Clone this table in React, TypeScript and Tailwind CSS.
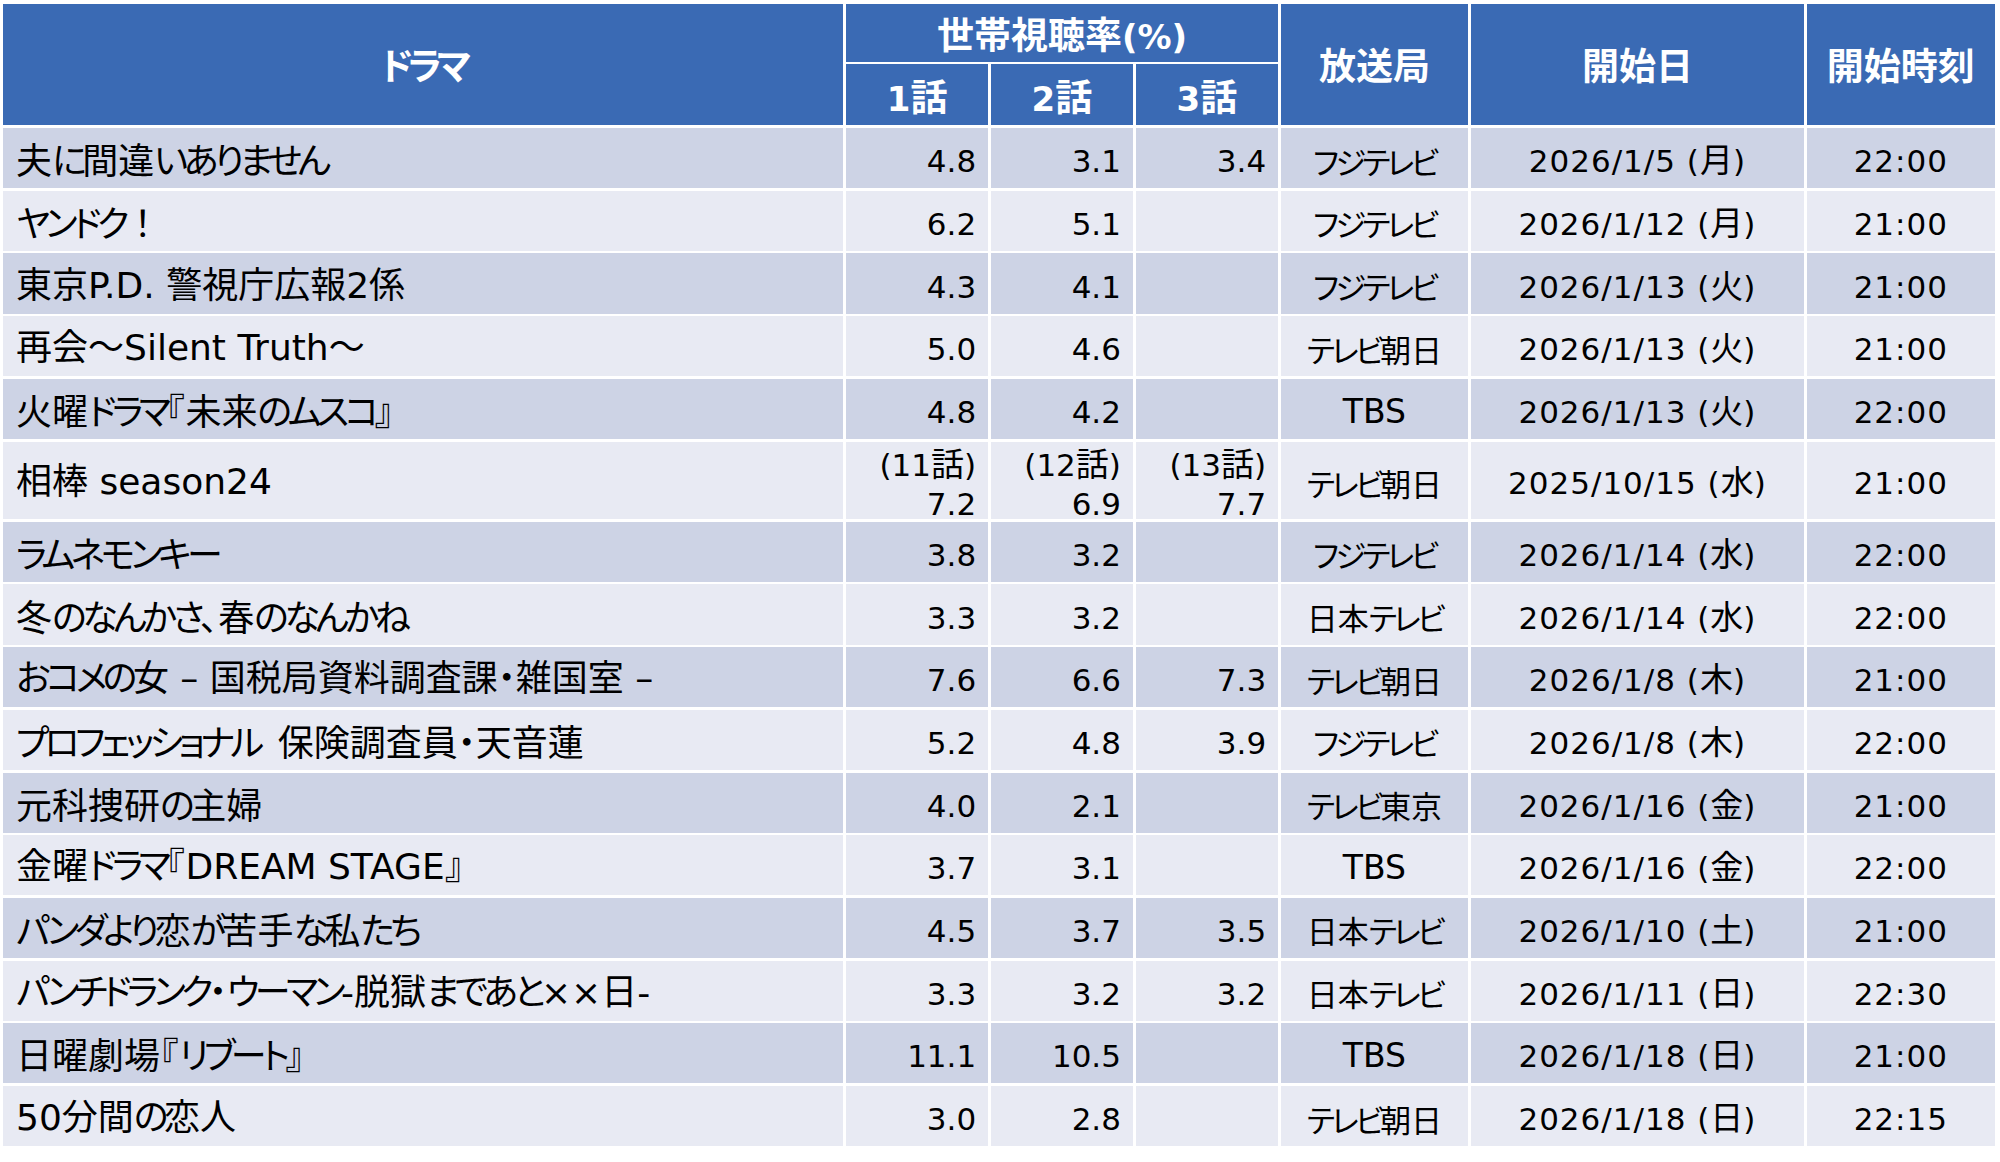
import React from 'react';

type Cell = string | [string, string];
type Row = { t: string; a: Cell; b: Cell; c: Cell; s: string; d: string; tm: string; tall?: boolean };

const rows: Row[] = [
  { t: '夫に間違いありません', a: '4.8', b: '3.1', c: '3.4', s: 'フジテレビ', d: '2026/1/5 (月)', tm: '22:00' },
  { t: 'ヤンドク！', a: '6.2', b: '5.1', c: '', s: 'フジテレビ', d: '2026/1/12 (月)', tm: '21:00' },
  { t: '東京P.D. 警視庁広報2係', a: '4.3', b: '4.1', c: '', s: 'フジテレビ', d: '2026/1/13 (火)', tm: '21:00' },
  { t: '再会～Silent Truth～', a: '5.0', b: '4.6', c: '', s: 'テレビ朝日', d: '2026/1/13 (火)', tm: '21:00' },
  { t: '火曜ドラマ『未来のムスコ』', a: '4.8', b: '4.2', c: '', s: 'TBS', d: '2026/1/13 (火)', tm: '22:00' },
  { t: '相棒 season24', a: ['(11話)', '7.2'], b: ['(12話)', '6.9'], c: ['(13話)', '7.7'], s: 'テレビ朝日', d: '2025/10/15 (水)', tm: '21:00', tall: true },
  { t: 'ラムネモンキー', a: '3.8', b: '3.2', c: '', s: 'フジテレビ', d: '2026/1/14 (水)', tm: '22:00' },
  { t: '冬のなんかさ、春のなんかね', a: '3.3', b: '3.2', c: '', s: '日本テレビ', d: '2026/1/14 (水)', tm: '22:00' },
  { t: 'おコメの女 – 国税局資料調査課・雑国室 –', a: '7.6', b: '6.6', c: '7.3', s: 'テレビ朝日', d: '2026/1/8 (木)', tm: '21:00' },
  { t: 'プロフェッショナル\u2002保険調査員・天音蓮', a: '5.2', b: '4.8', c: '3.9', s: 'フジテレビ', d: '2026/1/8 (木)', tm: '22:00' },
  { t: '元科捜研の主婦', a: '4.0', b: '2.1', c: '', s: 'テレビ東京', d: '2026/1/16 (金)', tm: '21:00' },
  { t: '金曜ドラマ『DREAM STAGE』', a: '3.7', b: '3.1', c: '', s: 'TBS', d: '2026/1/16 (金)', tm: '22:00' },
  { t: 'パンダより恋が苦手な私たち', a: '4.5', b: '3.7', c: '3.5', s: '日本テレビ', d: '2026/1/10 (土)', tm: '21:00' },
  { t: 'パンチドランク・ウーマン-脱獄まであと××日-', a: '3.3', b: '3.2', c: '3.2', s: '日本テレビ', d: '2026/1/11 (日)', tm: '22:30' },
  { t: '日曜劇場『リブート』', a: '11.1', b: '10.5', c: '', s: 'TBS', d: '2026/1/18 (日)', tm: '21:00' },
  { t: '50分間の恋人', a: '3.0', b: '2.8', c: '', s: 'テレビ朝日', d: '2026/1/18 (日)', tm: '22:15' },
];

type Kind = 'L' | 'K' | 'W' | 'O' | 'E' | 'C';
type Profile = Record<Kind, string>;

const P: Record<string, Profile> = {
  title: {
    L: "whitespace-pre leading-none [font-family:'DejaVu_Sans',sans-serif] text-[36px]",
    K: "leading-none [font-family:'Noto_Sans_CJK_JP',sans-serif] text-[36px] [font-feature-settings:'palt'] tracking-[-4.5px]",
    W: "leading-none [font-family:'Noto_Sans_CJK_JP',sans-serif] text-[36px]",
    O: "leading-none [font-family:'Noto_Sans_CJK_JP',sans-serif] text-[36px] [font-feature-settings:'palt'] tracking-[1px]",
    E: "leading-none [font-family:'Noto_Sans_CJK_JP',sans-serif] text-[36px] tracking-[-6px]",
    C: "whitespace-pre leading-none [font-family:'Noto_Sans_CJK_JP',sans-serif] text-[36px] [font-feature-settings:'palt']",
  },
  num: {
    L: "whitespace-pre leading-none [font-family:'DejaVu_Sans',sans-serif] text-[31px]",
    K: "leading-none [font-family:'Noto_Sans_CJK_JP',sans-serif] text-[33px] [font-feature-settings:'palt']",
    W: "leading-none [font-family:'Noto_Sans_CJK_JP',sans-serif] text-[33px]",
    O: "leading-none [font-family:'Noto_Sans_CJK_JP',sans-serif] text-[33px]",
    E: "leading-none [font-family:'Noto_Sans_CJK_JP',sans-serif] text-[33px]",
    C: "leading-none [font-family:'Noto_Sans_CJK_JP',sans-serif] text-[33px]",
  },
  station: {
    L: "whitespace-pre leading-none [font-family:'DejaVu_Sans',sans-serif] text-[33px]",
    K: "leading-none [font-family:'Noto_Sans_CJK_JP',sans-serif] text-[31px] [font-feature-settings:'palt'] tracking-[-3.5px]",
    W: "leading-none [font-family:'Noto_Sans_CJK_JP',sans-serif] text-[31px]",
    O: "leading-none [font-family:'Noto_Sans_CJK_JP',sans-serif] text-[31px]",
    E: "leading-none [font-family:'Noto_Sans_CJK_JP',sans-serif] text-[31px]",
    C: "leading-none [font-family:'Noto_Sans_CJK_JP',sans-serif] text-[31px]",
  },
  date: {
    L: "whitespace-pre leading-none [font-family:'DejaVu_Sans',sans-serif] text-[31px] tracking-[1px]",
    K: "leading-none [font-family:'Noto_Sans_CJK_JP',sans-serif] text-[33px]",
    W: "leading-none [font-family:'Noto_Sans_CJK_JP',sans-serif] text-[33px]",
    O: "leading-none [font-family:'Noto_Sans_CJK_JP',sans-serif] text-[33px]",
    E: "leading-none [font-family:'Noto_Sans_CJK_JP',sans-serif] text-[33px]",
    C: "leading-none [font-family:'Noto_Sans_CJK_JP',sans-serif] text-[33px]",
  },
  time: {
    L: "whitespace-pre leading-none [font-family:'DejaVu_Sans',sans-serif] text-[31px] tracking-[1px]",
    K: "leading-none [font-family:'Noto_Sans_CJK_JP',sans-serif] text-[32px]",
    W: "leading-none [font-family:'Noto_Sans_CJK_JP',sans-serif] text-[32px]",
    O: "leading-none [font-family:'Noto_Sans_CJK_JP',sans-serif] text-[32px]",
    E: "leading-none [font-family:'Noto_Sans_CJK_JP',sans-serif] text-[32px]",
    C: "leading-none [font-family:'Noto_Sans_CJK_JP',sans-serif] text-[32px]",
  },
  head: {
    L: "whitespace-pre leading-none font-bold [font-family:'DejaVu_Sans',sans-serif] text-[34px]",
    K: "leading-none font-bold [font-family:'Noto_Sans_CJK_JP',sans-serif] text-[37px] [font-feature-settings:'palt'] tracking-[-5px]",
    W: "leading-none font-bold [font-family:'Noto_Sans_CJK_JP',sans-serif] text-[37px]",
    O: "leading-none font-bold [font-family:'Noto_Sans_CJK_JP',sans-serif] text-[37px]",
    E: "leading-none font-bold [font-family:'Noto_Sans_CJK_JP',sans-serif] text-[37px]",
    C: "leading-none font-bold [font-family:'Noto_Sans_CJK_JP',sans-serif] text-[37px]",
  },
};

function kindOf(ch: string): Kind {
  if (/[\x20-\x7E×–]/.test(ch)) return 'L';
  if (/[～！]/.test(ch)) return 'W';
  if (ch === '『') return 'O';
  if (ch === '』') return 'E';
  if (/[\u3041-\u30FA\u30FC]/.test(ch)) return 'K';
  return 'C';
}

function Mixed({ text, p }: { text: string; p: Profile }) {
  const runs: { k: Kind; s: string }[] = [];
  for (const ch of Array.from(text)) {
    const k = kindOf(ch);
    const last = runs[runs.length - 1];
    if (last && last.k === k && k !== 'O' && k !== 'E') last.s += ch;
    else runs.push({ k, s: ch });
  }
  return (
    <span className="whitespace-nowrap">
      {runs.map((r, i) => (
        <span key={i} className={p[r.k]}>
          {r.s}
        </span>
      ))}
    </span>
  );
}

const strut = "[font-family:'Noto_Sans_CJK_JP',sans-serif] text-[35px] leading-none text-black";

function Num({ v, bg }: { v: Cell; bg: string }) {
  if (Array.isArray(v)) {
    return (
      <div className={`${bg} flex flex-col items-end justify-center pr-[12px] pt-[1px] [font-family:'Noto_Sans_CJK_JP',sans-serif] text-[35px] leading-[37px] text-black`}>
        <div>
          <Mixed text={v[0]} p={P.num} />
        </div>
        <div>
          <Mixed text={v[1]} p={P.num} />
        </div>
      </div>
    );
  }
  return (
    <div className={`${bg} ${strut} flex items-center justify-end pr-[12px]`}>
      <Mixed text={v} p={P.num} />
    </div>
  );
}

export default function App() {
  const hdr =
    "bg-[#3A6AB4] flex items-center justify-center text-white leading-none [font-family:'Noto_Sans_CJK_JP',sans-serif] text-[37px] font-bold";
  return (
    <div className="min-h-[1162px] w-[2000px] bg-white pl-[3px] pt-[4px]">
      <div className="grid grid-cols-[840.4px_142.2px_142.2px_142.6px_187.4px_333.4px_188.2px] grid-rows-[57.5px_61.4px_repeat(5,60.1px)_77.7px_repeat(10,60.1px)] gap-[2.6px] bg-white">
        <div className={`${hdr} row-span-2`}>
          <Mixed text="ドラマ" p={P.head} />
        </div>
        <div className={`${hdr} col-span-3 pt-[4px]`}>
          <Mixed text="世帯視聴率(%)" p={P.head} />
        </div>
        <div className={`${hdr} row-span-2`}>
          <Mixed text="放送局" p={P.head} />
        </div>
        <div className={`${hdr} row-span-2`}>
          <Mixed text="開始日" p={P.head} />
        </div>
        <div className={`${hdr} row-span-2`}>
          <Mixed text="開始時刻" p={P.head} />
        </div>
        <div className={`${hdr} pt-[3px]`}>
          <Mixed text="1話" p={P.head} />
        </div>
        <div className={`${hdr} pt-[3px]`}>
          <Mixed text="2話" p={P.head} />
        </div>
        <div className={`${hdr} pt-[3px]`}>
          <Mixed text="3話" p={P.head} />
        </div>
        {rows.map((r, i) => {
          const bg = i % 2 === 0 ? 'bg-[#CDD3E5]' : 'bg-[#E8EAF3]';
          return (
            <React.Fragment key={i}>
              <div className={`${bg} ${strut} flex items-center pl-[13px]`}>
                <Mixed text={r.t} p={P.title} />
              </div>
              <Num v={r.a} bg={bg} />
              <Num v={r.b} bg={bg} />
              <Num v={r.c} bg={bg} />
              <div className={`${bg} ${strut} flex items-center justify-center`}>
                <Mixed text={r.s} p={P.station} />
              </div>
              <div className={`${bg} ${strut} flex items-center justify-center`}>
                <Mixed text={r.d} p={P.date} />
              </div>
              <div className={`${bg} ${strut} flex items-center justify-center`}>
                <Mixed text={r.tm} p={P.time} />
              </div>
            </React.Fragment>
          );
        })}
      </div>
    </div>
  );
}
